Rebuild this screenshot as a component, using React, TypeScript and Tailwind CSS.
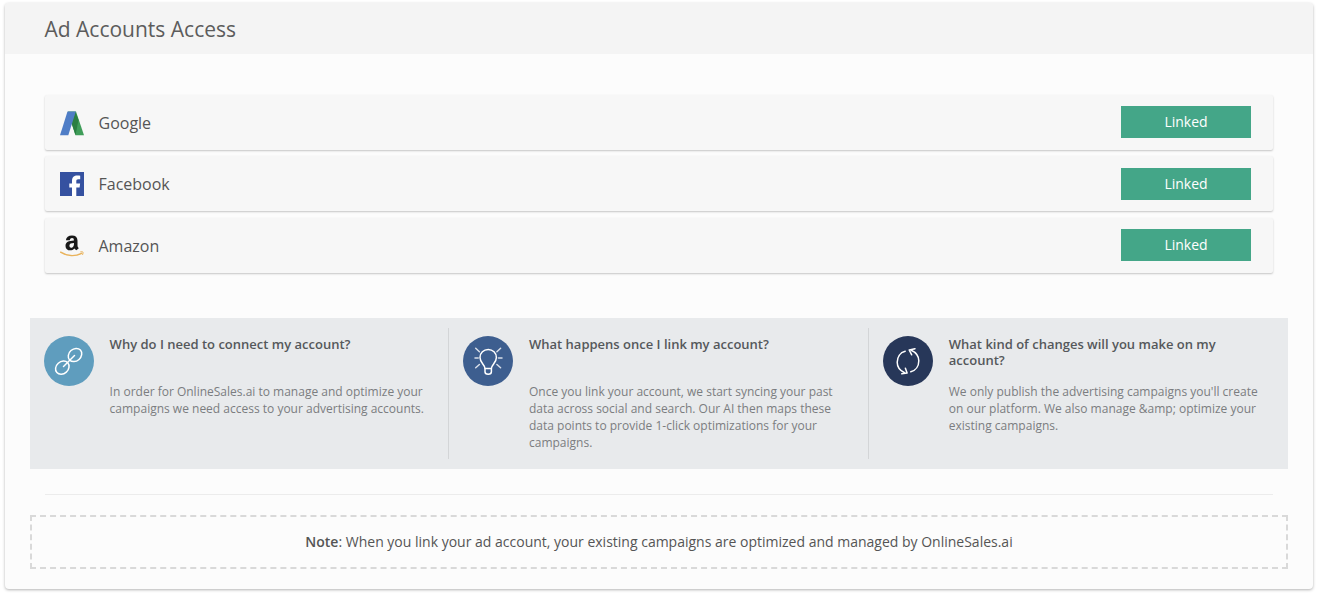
import { ReactNode } from "react";

interface Account {
  name: string;
  icon: ReactNode;
}

interface InfoItem {
  title: string;
  text: string;
  circle: string;
  icon: ReactNode;
}

const accounts: Account[] = [
  {
    name: "Google",
    icon: (
      <svg width="24" height="25" viewBox="0 0 24 25" className="mt-[1.5px]">
        <path d="M8 0.5h8l8 23.7h-8.5L11.5 12z" fill="#3f9d59" />
        <path d="M15.5 1 11.5 12l4 12.2L18.5 9z" fill="#2b7f42" />
        <path d="M7.5 0.5h8.3L8.3 24.2H0z" fill="#4f7dc6" />
      </svg>
    ),
  },
  {
    name: "Facebook",
    icon: (
      <svg width="24" height="24" viewBox="0 0 24 24">
        <path d="M0 0h24v24H0z" fill="#3551a0" />
        <path
          d="M12 24v-8.5H9.3v-4H12V9c0-3.6 2.1-5.4 5.3-5.4 1.3 0 2.3.1 2.9.2v3.5h-1.9c-1.6 0-2 .8-2 2v2.2h3.8l-.5 4h-3.3V24z"
          fill="#fff"
        />
      </svg>
    ),
  },
  {
    name: "Amazon",
    icon: (
      <svg width="24" height="22" viewBox="0 0 24 22" className="mt-[1.5px]">
        <path
          d="M5.900 5.200C6.200 2.200 8.500.4 11.900.4c3.700 0 5.600 1.800 5.600 5.100v4.800c0 1.400.5 2 1.300 2.900l-2.400 2.100c-.9-.7-1.400-1.200-1.800-1.900-3.200 3.300-9.100 2.300-9.100-2.500 0-3.800 3.200-5.100 8.400-5.300.1-1.700-.5-2.500-1.900-2.500-1.200 0-1.900.7-2.200 2.100zM14 8.100c-2.900 0-4.600.7-4.600 2.700 0 2.400 2.700 2.600 3.900.7.600-.9.700-1.800.7-3.400z"
          fill="#181818"
        />
        <path d="M.6 17.200c6.600 4.200 14.800 4.300 21 1.200" fill="none" stroke="#e9b35c" strokeWidth="1.5" strokeLinecap="round" />
        <path d="M20.300 16.900c2.800-.5 3.400-.1 2.200 3" fill="none" stroke="#e9b35c" strokeWidth="1" />
      </svg>
    ),
  },
];

const infoItems: InfoItem[] = [
  {
    title: "Why do I need to connect my account?",
    text: "In order for OnlineSales.ai to manage and optimize your campaigns we need access to your advertising accounts.",
    circle: "bg-[#5f9dbe]",
    icon: (
      <>
        <ellipse cx="31" cy="19" rx="7.3" ry="6" transform="rotate(-42 31 19)" />
        <ellipse cx="18.3" cy="31.7" rx="7.3" ry="6" transform="rotate(-42 18.3 31.7)" />
        <path d="M19.5 30.5 30.5 19.5" />
      </>
    ),
  },
  {
    title: "What happens once I link my account?",
    text: "Once you link your account, we start syncing your past data across social and search. Our AI then maps these data points to provide 1-click optimizations for your campaigns.",
    circle: "bg-[#3d5e8f]",
    icon: (
      <>
        <path d="M22 32.5c0-4-5-5.500-5-11 0-4.500 3.600-8 8.200-8s8.200 3.500 8.200 8c0 5.500-5 7-5 11z" />
        <path d="M22 32.5v3.200c0 1.500 1 2.500 3.200 2.500s3.200-1 3.200-2.500v-3.200" />
        <path d="m12.700 12.200 3.700 3.500M37.600 12.200l-3.700 3.500M12 22h3.200M35.500 22h3.500M12.700 31.800l3.700-3.300M37.600 31.800l-3.700-3.300" opacity=".8" />
      </>
    ),
  },
  {
    title: "What kind of changes will you make on my account?",
    text: "We only publish the advertising campaigns you'll create on our platform. We also manage &amp; optimize your existing campaigns.",
    circle: "bg-[#273759]",
    icon: (
      <>
        <path d="M22.200 15.200c-5.200 1.300-8 6-8 11 0 4.500 2.600 8.300 7.400 10.500" />
        <path d="m18.800 37.800 5.300-.8-1.700-4.800" />
        <path d="M27.800 35.800c5.200-1.300 8-6 8-11 0-4.500-2.600-8.300-7.600-10.600" />
        <path d="m32 12.700-5.800 1.300 2.500 4.800" />
      </>
    ),
  },
];

function AccountRow({ name, icon }: Account) {
  return (
    <div className="flex h-[55.4px] items-center rounded-[2px] bg-[#f7f7f7] pl-[15px] pr-[22px] shadow-[0_1px_2px_rgba(0,0,0,0.22)]">
      <div className="flex w-6 justify-center">{icon}</div>
      <span className="ml-[14.5px] pt-px text-base text-[#555]">{name}</span>
      <button className="ml-auto h-8 w-[130px] bg-[#44a688] text-sm text-white">Linked</button>
    </div>
  );
}

function InfoColumn({ title, text, circle, icon }: InfoItem) {
  return (
    <div className="flex h-[131px] border-r border-[#d3d5d7] pl-[14px] pt-2 last:border-r-0">
      <div className={`h-[50px] w-[50px] shrink-0 rounded-full ${circle}`}>
        <svg
          width="50"
          height="50"
          viewBox="0 0 50 50"
          fill="none"
          stroke="#fff"
          strokeWidth="1.5"
          strokeLinecap="round"
          strokeLinejoin="round"
        >
          {icon}
        </svg>
      </div>
      <div className="ml-[15.6px] w-[318px]">
        <h3 className="h-[47px] text-[13px] font-semibold leading-4 text-[#55585b]">{title}</h3>
        <p className="text-xs leading-[17px] text-[#7b7d80]">{text}</p>
      </div>
    </div>
  );
}

export default function App() {
  return (
    <div className="h-[595px] bg-white px-[5px] pt-[3px] font-['Open_Sans',sans-serif]">
      <div className="h-[586px] w-[1308px] rounded-[4px] bg-[#fcfcfc] shadow-[0_1px_3px_rgba(0,0,0,0.3)]">
        <header className="flex h-[51px] items-center rounded-t-[4px] bg-[#f4f4f4] pl-[39.5px] pt-0.5">
          <h1 className="text-[21px] text-[#5c5c5c]">Ad Accounts Access</h1>
        </header>

        <div className="flex flex-col gap-[6.1px] pl-10 pr-10 pt-[40.6px]">
          {accounts.map((account) => (
            <AccountRow key={account.name} {...account} />
          ))}
        </div>

        <section className="ml-[25px] mt-[45px] grid h-[151px] w-[1258px] grid-cols-[419.4px_419.8px_418.8px] bg-[#e8eaec] pt-[10px]">
          {infoItems.map((item) => (
            <InfoColumn key={item.title} {...item} />
          ))}
        </section>

        <hr className="mx-10 mt-[25px] border-[#ececec]" />

        <div className="ml-[25px] mt-5 flex h-[54px] w-[1258px] items-center justify-center border-2 border-dashed border-[#d9d9d9] text-sm text-[#555]">
          <p>
            <strong className="font-semibold">Note</strong>: When you link your ad account, your existing campaigns are optimized and managed by OnlineSales.ai
          </p>
        </div>
      </div>
    </div>
  );
}
